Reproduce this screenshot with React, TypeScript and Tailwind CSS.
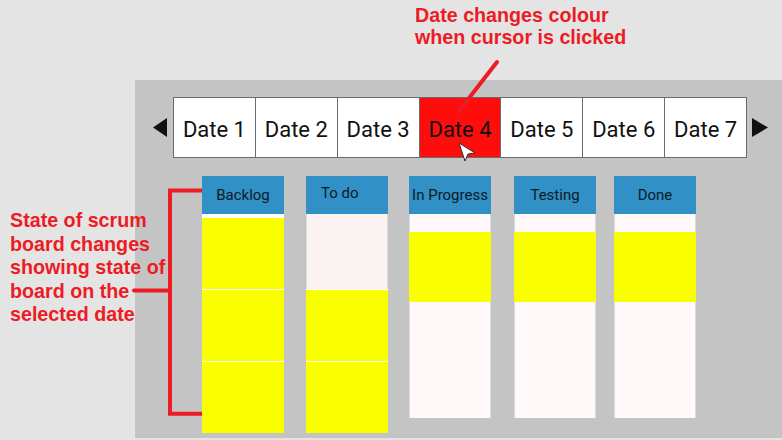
const dates = ["Date 1", "Date 2", "Date 3", "Date 4", "Date 5", "Date 6", "Date 7"];

function Header({ label, left }: { label: string; left?: boolean }) {
  return (
    <div
      className={
        "h-[38px] bg-[#3190c6] flex items-center text-[15px] text-[#0e1a24] " +
        (left ? "pl-[15px] pb-[3px]" : "justify-center")
      }
    >
      {label}
    </div>
  );
}

function Card() {
  return <div className="h-[71px] bg-[#faff00]" />;
}

function Backlog() {
  return (
    <div className="w-[82px]">
      <Header label="Backlog" />
      <div className="bg-white pt-[4px] flex flex-col gap-px">
        <Card />
        <Card />
        <Card />
      </div>
    </div>
  );
}

function Todo() {
  return (
    <div className="w-[82px] ml-[22px]">
      <Header label="To do" left />
      <div className="bg-white flex flex-col gap-px">
        <div className="h-[75px] bg-[#fbf2f2] border-x border-[#dcdcdc]" />
        <Card />
        <Card />
      </div>
    </div>
  );
}

function Lane({ label, className }: { label: string; className: string }) {
  return (
    <div className={"w-[82px] " + className}>
      <Header label={label} />
      <div className="h-[204px] bg-[#fffaf9] border-x border-[#dcdcdc] pt-[18px]">
        <div className="-mx-px h-[70px] bg-[#faff00]" />
      </div>
    </div>
  );
}

export default function App() {
  return (
    <div className="relative w-[782px] h-[440px] overflow-hidden bg-[#e4e4e4] font-['Roboto',sans-serif]">
      <div className="h-[80px] pl-[415px] pt-[4px] text-[19.7px] leading-[22px] font-bold text-[#ed1c24] font-['Liberation_Sans',Arial,sans-serif] whitespace-nowrap">
        Date changes colour
        <br />
        when cursor is clicked
      </div>

      <div className="flex h-[358px]">
        <div className="relative z-10 w-[135px] pl-[10px] pt-[129px] text-[19.7px] leading-[23.5px] font-bold text-[#ed1c24] font-['Liberation_Sans',Arial,sans-serif] whitespace-nowrap">
          State of scrum
          <br />
          board changes
          <br />
          showing state of
          <br />
          board on the
          <br />
          selected date
        </div>

        <div className="flex-1 bg-[#c4c4c4] pt-[17px]">
          <div className="flex items-center pl-[18px] h-[61px]">
            <svg width="14" height="19" viewBox="0 0 14 19">
              <polygon points="14,0 14,19 0,9.5" fill="#111" />
            </svg>
            <div className="ml-[6px] flex w-[574px] h-[61px] border border-[#6b6b6b] bg-white">
              {dates.map((d, i) => (
                <div
                  key={d}
                  className={
                    "flex-1 flex items-center justify-center pt-[3px] text-[22px] text-[#111] " +
                    (i > 0 ? "border-l border-[#6b6b6b] " : "") +
                    (i === 3 ? "bg-[#ff0d0d]" : "")
                  }
                >
                  {d}
                </div>
              ))}
            </div>
            <svg className="ml-[5px]" width="16" height="19" viewBox="0 0 16 19">
              <polygon points="0,0 16,9.5 0,19" fill="#111" />
            </svg>
          </div>

          <div className="mt-[18px] pl-[67px] flex items-start">
            <Backlog />
            <Todo />
            <Lane label="In Progress" className="ml-[21px]" />
            <Lane label="Testing" className="ml-[23px]" />
            <Lane label="Done" className="ml-[18px]" />
          </div>
        </div>
      </div>

      <div className="h-[2px] bg-[#e4e4e4]" />

      <svg className="absolute inset-0 pointer-events-none" width="782" height="440" viewBox="0 0 782 440">
        <line x1="497" y1="62" x2="459" y2="111" stroke="#ed1c24" strokeWidth="4" strokeLinecap="round" />
        <polygon points="459,143 475,153 468,154 465,161" fill="#fff" stroke="#333" strokeWidth="1" strokeLinejoin="round" />
        <path d="M202 190.5 H170 V413.7 H202" fill="none" stroke="#ed1c24" strokeWidth="4" />
        <line x1="134" y1="290.5" x2="170" y2="290.5" stroke="#ed1c24" strokeWidth="4" strokeLinecap="round" />
      </svg>
    </div>
  );
}
